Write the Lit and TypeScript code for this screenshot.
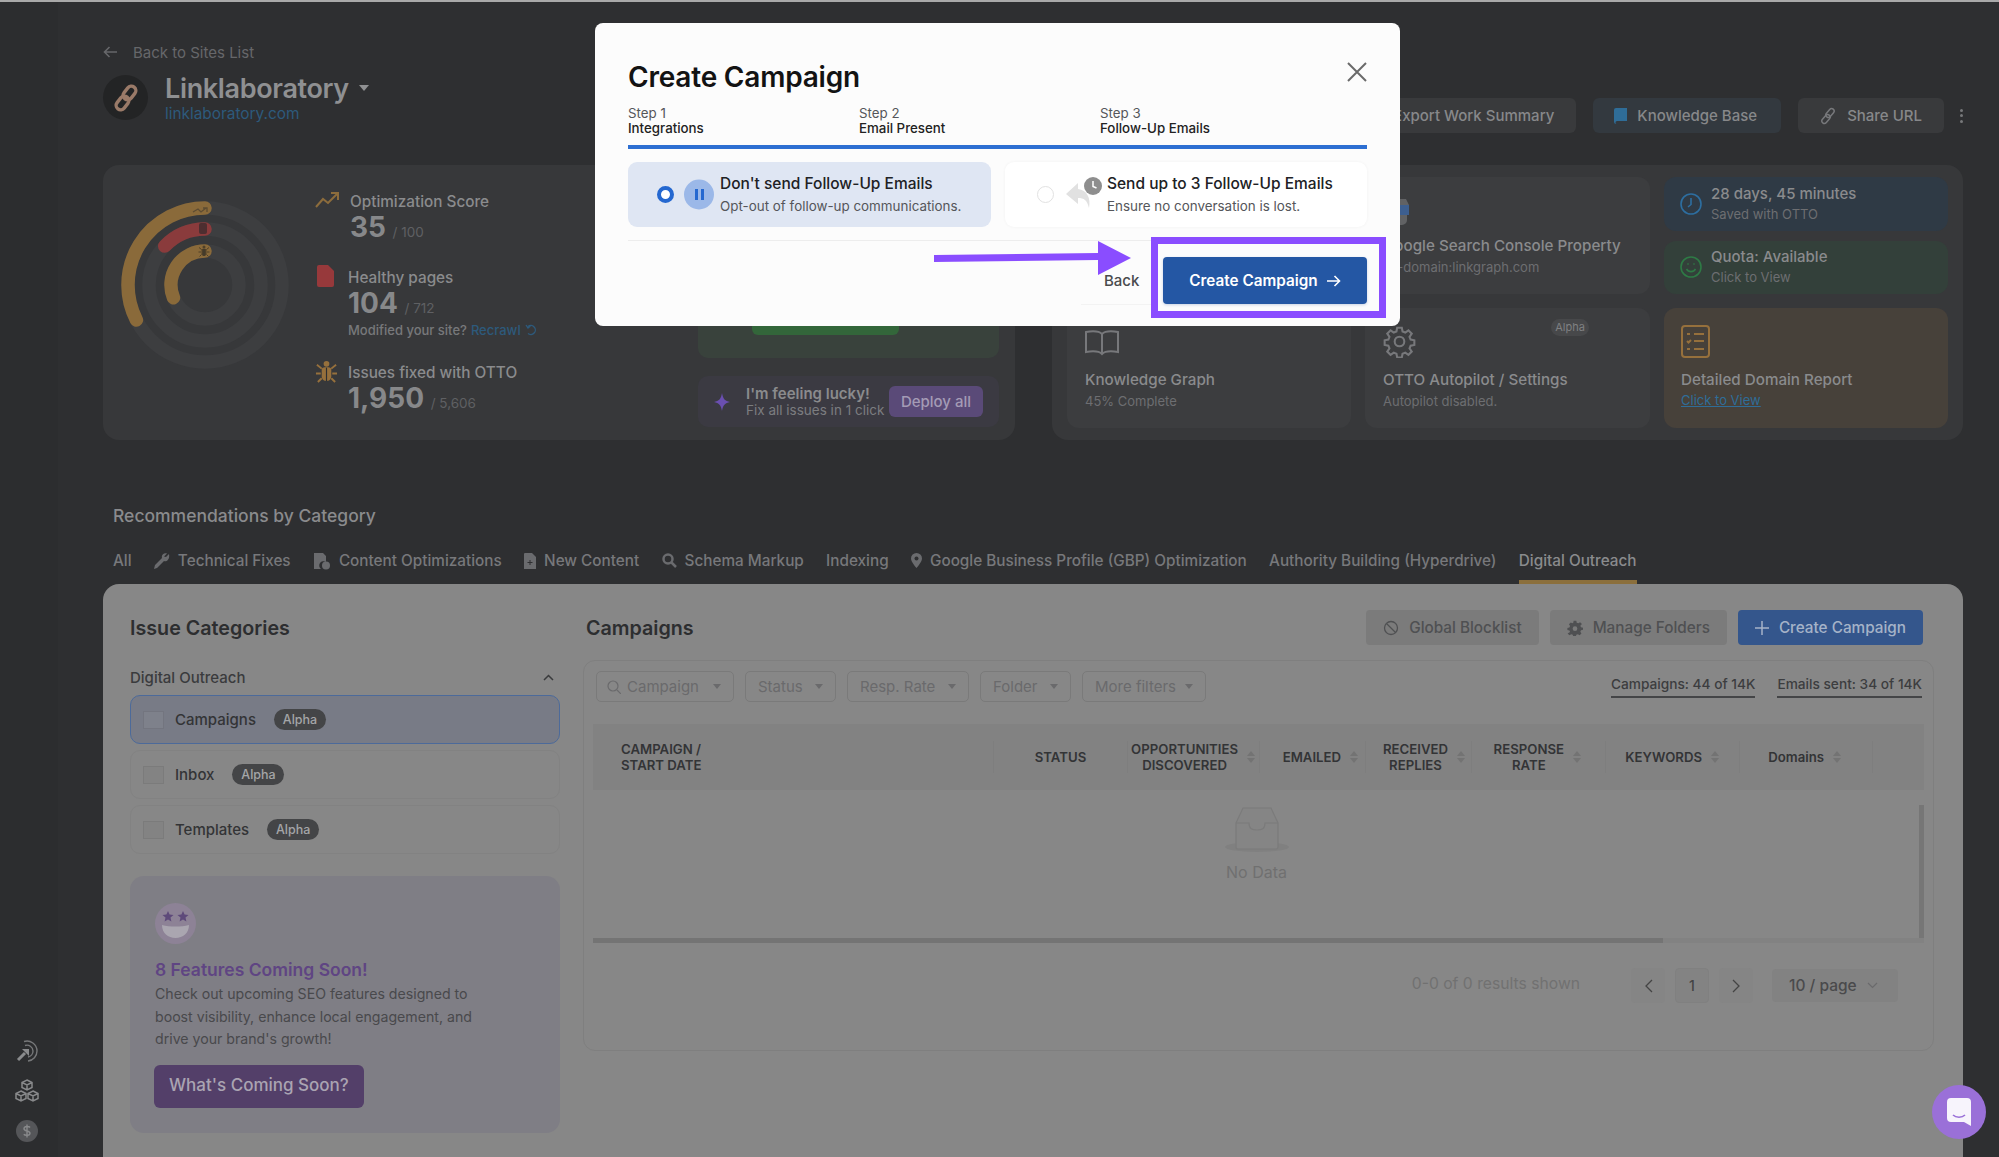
import { LitElement, html, css, svg } from 'lit';
import { customElement } from 'lit/decorators.js';

const arc = (r: number, deg: number) => {
  const a = (deg * Math.PI) / 180;
  const x = 84 - r * Math.sin(a);
  const y = 84 - r * Math.cos(a);
  return `M84 ${84 - r} A${r} ${r} 0 ${deg > 180 ? 1 : 0} 0 ${x} ${y}`;
};

const bug = (c: string) => svg`<g fill=${c}><circle cx="12" cy="4" r="3"/><path d="M7 9c1-2 9-2 10 0v8c0 3-2 5-5 5s-5-2-5-5z"/><path d="M7 9 2 5M17 9l5-4M6 14H1M18 14h5M7 19l-4 4M17 19l4 4" stroke=${c} stroke-width="2"/></g><path d="M12 8v14" stroke="#2e2f31" stroke-width="1.2"/>`;

const COLUMNS = [
  { label: ['CAMPAIGN /', 'START DATE'], left: true },
  { label: ['STATUS'], pad: 0 },
  { label: ['OPPORTUNITIES', 'DISCOVERED'], sort: true, pad: 4 },
  { label: ['EMAILED'], sort: true, pad: 7 },
  { label: ['RECEIVED', 'REPLIES'], sort: true, pad: 6 },
  { label: ['RESPONSE', 'RATE'], sort: true, pad: 24 },
  { label: ['KEYWORDS'], sort: true, pad: 20 },
  { label: ['Domains'], sort: true, pad: 31 },
];

@customElement('app-root')
export class AppRoot extends LitElement {
  static styles = css`
    :host {
      display: block;
      height: 1157px;
      overflow: hidden;
      font-family: Inter, 'Noto Sans', sans-serif;
      background: #2e2f31;
      color: #8a8b8d;
      position: relative;
    }
    * { box-sizing: border-box; }
    svg { display: block; flex: none; }
    .topline { height: 2px; background: #a9a9a9; }
    .page { display: flex; height: 1155px; }

    .side {
      width: 58px;
      flex: none;
      background: #2c2d2f;
      display: flex;
      flex-direction: column;
      justify-content: flex-end;
      align-items: center;
      gap: 17px;
      padding: 0 4px 15px 0;
    }
    .main { flex: 1; min-width: 0; padding: 40px 36px 0 45px; display: flex; flex-direction: column; }

    .head { display: flex; justify-content: space-between; height: 123px; }
    .back { display: flex; align-items: center; gap: 16px; height: 20px; font-size: 15px; color: #66676a; }
    .brand { display: flex; gap: 17px; margin-top: 13px; }
    .avatar { width: 45px; height: 45px; border-radius: 50%; background: #232425; display: flex; align-items: center; justify-content: center; }
    .brand-name { display: flex; align-items: center; gap: 10px; height: 32px; margin-top: -3px; font-size: 27px; font-weight: 600; color: #8f9092; letter-spacing: -0.35px; }
    .caret { width: 0; height: 0; border: 5px solid transparent; border-top: 6px solid #8f9092; border-bottom: 0; }
    .brand-link { font-size: 15.4px; line-height: 20px; color: #2d5a7c; }
    .actions { display: flex; align-items: center; gap: 17px; margin-top: 56px; height: 35px; }
    .action { height: 35px; display: flex; align-items: center; gap: 10px; padding: 0 22px; border-radius: 6px; background: #393a3c; font-size: 15px; font-weight: 500; color: #87888a; }
    .action.kb { background: #33393f; padding: 0 24px 0 21px; }
    .action.share { padding: 0 22px 0 21px; }
    .kebab { display: flex; flex-direction: column; gap: 2.5px; margin-left: -1px; }
    .kebab i { width: 3px; height: 3px; background: #77787a; border-radius: 50%; }

    .stats { display: grid; grid-template-columns: 912px 911px; gap: 37px; height: 275px; }
    .card { background: #37383a; border-radius: 16px; }
    .score { display: flex; padding: 36px 16px 0 18px; }
    .score-col { width: 383px; margin-left: 26px; margin-top: -9px; display: flex; flex-direction: column; gap: 20px; }
    .stat { display: flex; }
    .stat.last { margin-top: 3px; }
    .stat-ico { width: 33px; flex: none; }
    .stat-label { font-size: 15.3px; line-height: 20px; font-weight: 500; color: #8a8b8d; }
    .stat-value { font-size: 28px; line-height: 31px; font-weight: 700; color: #87888a; }
    .stat-value small { font-size: 13.5px; font-weight: 400; color: #5f6063; }
    .stat-note { font-size: 13px; line-height: 20px; display: flex; align-items: center; gap: 4px; color: #77787b; font-weight: 500; margin-top: -4px; }
    .stat-note b { color: #2d5a7c; font-weight: 500; }
    .deploy-col { width: 301px; margin-top: -24px; display: flex; flex-direction: column; gap: 18px; }
    .green { height: 181px; border-radius: 10px; background: #39423c; display: flex; align-items: flex-end; padding: 0 0 23px 54px; }
    .green i { width: 147px; height: 36px; border-radius: 6px; background: #33663a; }
    .lucky { height: 51px; border-radius: 10px; background: #3b3a42; display: flex; align-items: center; padding: 0 16px 0 15px; }
    .lucky-text { margin-left: 15px; flex: 1; font-size: 13.5px; line-height: 17px; color: #7c7d80; white-space: nowrap; }
    .lucky-text b { display: block; font-size: 15px; font-weight: 600; color: #8a8b8d; }
    .deploy-btn { width: 94px; height: 31px; border-radius: 6px; background: #5a4a78; color: #a49bb5; display: flex; align-items: center; justify-content: center; font-size: 15px; font-weight: 500; flex: none; }

    .tools { display: grid; grid-template-columns: 284px 285px 284px; grid-template-rows: 117px 120px; gap: 14px; padding: 12px 15px; }
    .tool { background: #3c3d3f; border-radius: 12px; padding: 17px 18px; position: relative; }
    .tool.orange { background: #47413a; padding-left: 17px; }
    .tool-title { font-size: 15.2px; line-height: 20px; font-weight: 500; color: #8a8b8d; margin-top: 12px; white-space: nowrap; }
    .tool-sub { font-size: 13px; line-height: 20px; color: #6d6e71; margin-top: 1px; }
    .tool-link { font-size: 13px; line-height: 16px; color: #2f6d98; margin-top: 2px; text-decoration: underline; }
    .gsc { padding-top: 22px; }
    .gsc .tool-title { margin-top: 11px; }
    .book { margin: 5px 0 14px; }
    .alpha-tag { position: absolute; top: 11px; right: 61px; width: 38px; height: 17px; border-radius: 9px; background: #47484a; font-size: 11px; line-height: 17px; text-align: center; color: #7f8082; }
    .mini-stack { display: flex; flex-direction: column; gap: 10px; }
    .mini { flex: 1; border-radius: 12px; display: flex; align-items: center; gap: 9px; padding: 0 16px; }
    .mini.blue { background: #2f3a45; }
    .mini.green2 { background: #33403a; }
    .mini b { display: block; font-size: 15px; line-height: 20px; font-weight: 500; color: #8a8b8d; }
    .mini span { display: block; font-size: 13px; line-height: 20px; color: #6d6e71; }

    h2 { margin: 64px 0 0 10px; font-size: 17.5px; line-height: 24px; font-weight: 500; color: #8a8b8d; }
    .tabs { display: flex; gap: 22.3px; margin: 21px 0 0 10px; height: 35px; font-size: 15.3px; font-weight: 500; color: #77787b; white-space: nowrap; }
    .tab { display: flex; gap: 8px; height: 35px; line-height: 24px; align-items: flex-start; }
    .tab svg { margin-top: 4px; }
    .tab.on { border-bottom: 4px solid #8b6f3c; color: #8a8b8d; }

    .panel { flex: 1; background: #878787; border-radius: 16px 16px 0 0; display: flex; gap: 23px; padding: 26px 29px 0 27px; min-height: 0; }
    .cats { width: 430px; flex: none; }
    .panel-title { font-size: 19.7px; line-height: 37px; height: 35px; font-weight: 600; color: #2d2e30; margin: 0; }
    .group { display: flex; justify-content: space-between; align-items: center; margin: 20px 0 6px; height: 24px; font-size: 15px; font-weight: 500; color: #3a3b3d; padding-right: 6px; }
    .cat { height: 49px; margin-bottom: 6px; border: 1px solid #828282; border-radius: 10px; display: flex; align-items: center; padding-left: 12px; font-size: 15px; font-weight: 500; color: #333436; }
    .cat.on { background: #787b86; border-color: #4c6a9a; }
    .box { width: 21px; height: 18px; border: 1px solid #7b7b7b; background: #838383; margin-right: 11px; }
    .cat.on .box { background: #7e818b; border-color: #73757f; }
    .badge { margin-left: 18px; width: 52px; height: 21px; border-radius: 11px; background: #444547; color: #a5a6a8; font-size: 12.5px; line-height: 21px; text-align: center; }
    .promo { height: 257px; margin-top: 22px; border-radius: 14px; background: #7f7e85; padding: 27px 25px 0; }
    .promo h3 { margin: 14px 0 0; font-size: 17.5px; line-height: 24px; font-weight: 600; color: #5f4583; }
    .promo p { margin: 1px 0 14px; font-size: 14.15px; line-height: 22.5px; color: #49494c; }
    .promo-btn { display: inline-block; height: 43px; line-height: 41px; margin-left: -1px; padding: 0 15px; border-radius: 6px; background: #533f69; color: #aaa4b2; font-size: 17px; font-weight: 500; }

    .camp { flex: 1; min-width: 0; }
    .camp-head { display: flex; align-items: center; gap: 11px; padding: 0 11px 0 3px; }
    .camp-head .panel-title { flex: 1; }
    .btn { height: 35px; display: flex; align-items: center; gap: 10px; padding: 0 17px; background: #7b7b7b; border-radius: 4px; font-size: 15.3px; font-weight: 500; color: #4f5052; white-space: nowrap; }
    .btn.primary { background: #34568c; color: #a5b3c8; }
    .table-box { height: 391px; margin-top: 15px; border: 1px solid #7f7f7f; border-radius: 12px; padding: 10px 9px 0; position: relative; }
    .filters { display: grid; grid-template-columns: 138px 91px 122px 91px 124px 1fr auto; column-gap: 11px; padding: 0 2px 0 3px; align-items: start; height: 31px; }
    .filter { height: 31px; display: flex; align-items: center; justify-content: space-between; padding: 0 12px; border: 1px solid #7a7a7a; border-radius: 5px; font-size: 15px; color: #6a6a6c; white-space: nowrap; }
    .filter.s { padding-left: 10px; }
    .filter.s span { margin: 0 auto 0 6px; }
    .tri { width: 0; height: 0; border: 4px solid transparent; border-top: 5px solid #6a6a6c; border-bottom: 0; }
    .quota { font-size: 13.7px; font-weight: 500; line-height: 20px; color: #3c3d3f; padding: 3px 0 2px; border-bottom: 2px solid #444547; white-space: nowrap; }
    .quota.first { justify-self: end; }
    .thead { display: grid; grid-template-columns: 401px 134px 132px 106px 106px 134px 134px 133px 1fr; height: 66px; margin-top: 22px; background: #828282; align-items: center; }
    .th { display: flex; align-items: center; justify-content: flex-end; gap: 9px; height: 32px; border-right: 1px solid #7e7e7e; font-size: 13.2px; line-height: 16px; font-weight: 600; color: #333436; text-align: center; }
    .th.left { justify-content: flex-start; padding-left: 28px; text-align: left; }
    .th.center { justify-content: center; }
    .th:last-child { border: 0; }
    .sort { display: flex; flex-direction: column; gap: 2px; }
    .sort i { width: 0; height: 0; border: 4px solid transparent; }
    .sort i:first-child { border-bottom: 5px solid #737373; border-top: 0; }
    .sort i:last-child { border-top: 5px solid #737373; border-bottom: 0; }
    .tbody { height: 148px; position: relative; display: flex; flex-direction: column; align-items: center; padding: 17px 4px 0 0; font-size: 16px; line-height: 20px; color: #707070; }
    .tbody span { margin-top: 9px; }
    .vbar { position: absolute; top: 15px; right: 0; width: 5px; height: 133px; background: #767676; }
    .hbar { height: 5px; background: #828282; }
    .hbar i { display: block; width: 1070px; height: 5px; background: #747474; }
    .pager { display: flex; align-items: center; justify-content: flex-end; gap: 10px; margin-top: 25px; padding-right: 26px; height: 35px; }
    .results { font-size: 15.7px; color: #717171; margin-right: 41px; margin-top: -5px; }
    .pg { width: 34px; height: 35px; border-radius: 4px; background: #858585; display: flex; align-items: center; justify-content: center; font-size: 14px; font-weight: 500; color: #444; }
    .pg.cur { background: #838383; border: 1px solid #808080; }
    .size { width: 126px; height: 33px; margin-left: 9px; border-radius: 4px; background: #828282; display: flex; align-items: center; gap: 10px; padding: 0 10px 0 17px; font-size: 15.5px; font-weight: 500; color: #4a4a4c; white-space: nowrap; }

    .chat { position: absolute; left: 1932px; top: 1085px; width: 54px; height: 54px; border-radius: 50%; background: #9a70d8; display: flex; align-items: center; justify-content: center; }

    .modal { position: absolute; left: 595px; top: 23px; width: 805px; height: 303px; background: #fcfcfc; border-radius: 8px; padding: 35px 33px 0; color: #222; }
    .modal h1 { margin: 0; font-size: 28px; line-height: 38px; font-weight: 600; color: #131313; letter-spacing: -0.2px; }
    .close { position: absolute; left: 752px; top: 39px; }
    .steps { display: grid; grid-template-columns: 231px 241px 1fr; margin-top: 10px; padding-bottom: 9px; border-bottom: 4px solid #2d6fd2; font-size: 13.3px; line-height: 15px; }
    .steps span { display: block; color: #55565a; }
    .steps b { display: block; font-weight: 500; color: #222; }
    .options { display: grid; grid-template-columns: 363px 362px; gap: 14px; margin-top: 13px; }
    .option { height: 65px; border-radius: 9px; display: flex; align-items: center; background: #fff; box-shadow: 0 0 3px #f1f1f1; }
    .option.on { background: #dfe6f3; box-shadow: none; padding-left: 29px; }
    .option.off { padding-left: 32px; }
    .radio { width: 17px; height: 17px; border-radius: 50%; border: 4.5px solid #2568d0; background: #fff; flex: none; }
    .off .radio { border: 1.5px solid #e2e2e2; }
    .pause { margin-left: 10px; margin-right: 6px; }
    .reply { margin-left: 11px; margin-right: 4px; }
    .opt-title { font-size: 15.5px; line-height: 20px; font-weight: 500; color: #202124; white-space: nowrap; }
    .opt-sub { font-size: 13.4px; line-height: 20px; color: #55565a; margin-top: 2px; white-space: nowrap; }
    .modal-foot { margin-top: 13px; border-top: 1px solid #ededed; display: flex; justify-content: flex-end; padding-top: 16px; }
    .back-btn { width: 74px; height: 48px; border-bottom: 1px solid #f3f3f3; display: flex; align-items: center; padding-left: 23px; font-size: 15px; font-weight: 500; color: #4a4b4d; }
    .go { width: 204px; height: 47px; margin-left: 8px; background: #2457a4; border-radius: 4px; display: flex; align-items: center; justify-content: center; gap: 9px; color: #fff; font-size: 15.3px; font-weight: 600; box-shadow: 0 1px 3px #c8d2e4; }
    .callout { position: absolute; left: 556px; top: 214px; width: 235px; height: 81px; border: 7px solid #8a4dff; }
    .pointer { position: absolute; left: 934px; top: 241px; }
  `;

  private sort() {
    return html`<div class="sort"><i></i><i></i></div>`;
  }

  render() {
    return html`
      <div class="topline"></div>
      <div class="page">
        ${this.renderSide()}
        <div class="main">
          <div class="head">
            <div>
              <div class="back">
                <svg width="14" height="12" viewBox="0 0 14 12" fill="none" stroke="#66676a" stroke-width="1.6"><path d="M14 6H1.5M6.5 1 1.5 6l5 5"/></svg>
                Back to Sites List
              </div>
              <div class="brand">
                <div class="avatar">
                  <svg width="28" height="28" viewBox="0 0 28 28" fill="none" stroke="#9a7a68" stroke-width="3.4"><rect x="13" y="1.5" width="9" height="15" rx="4.5" transform="rotate(38 17.5 9)"/><rect x="6" y="11.5" width="9" height="15" rx="4.5" transform="rotate(38 10.5 19)"/></svg>
                </div>
                <div>
                  <div class="brand-name">Linklaboratory <i class="caret"></i></div>
                  <div class="brand-link">linklaboratory.com</div>
                </div>
              </div>
            </div>
            <div class="actions">
              <div class="action">Export Work Summary</div>
              <div class="action kb">
                <svg width="13" height="16" viewBox="0 0 13 16"><path d="M2 0h11v13H3a1 1 0 0 0 0 3h10H2.500A2.500 2.500 0 0 1 0 13.500V2a2 2 0 0 1 2-2z" fill="#2f6d98"/></svg>
                Knowledge Base
              </div>
              <div class="action share">
                <svg width="18" height="18" viewBox="0 0 18 18" fill="none" stroke="#77787b" stroke-width="1.5"><rect x="8.500" y="1" width="5" height="10" rx="2.500" transform="rotate(40 11 6)"/><rect x="4.500" y="7" width="5" height="10" rx="2.500" transform="rotate(40 7 12)"/></svg>
                Share URL
              </div>
              <div class="kebab"><i></i><i></i><i></i></div>
            </div>
          </div>
          <div class="stats">
            ${this.renderScore()}
            ${this.renderTools()}
          </div>
          <h2>Recommendations by Category</h2>
          ${this.renderTabs()}
          <div class="panel">
            ${this.renderCats()}
            ${this.renderCampaigns()}
          </div>
        </div>
      </div>
      <div class="chat">
        <svg width="24" height="28" viewBox="0 0 24 28"><path d="M4 0h16a4 4 0 0 1 4 4v24l-7-4H4a4 4 0 0 1-4-4V4a4 4 0 0 1 4-4z" fill="#f7f4fc"/><path d="M6 17c3 3 9 3 12 0" fill="none" stroke="#9a70d8" stroke-width="1.6"/></svg>
      </div>
      ${this.renderModal()}
    `;
  }

  private renderSide() {
    return html`<div class="side">
      <svg width="23" height="23" viewBox="0 0 23 23" fill="none" stroke="#77787a" stroke-width="1.4"><path d="M8 2.500A10 10 0 0 1 21 12a10 10 0 0 1-9 10"/><path d="M9 6.500A6 6 0 0 1 17 12a6 6 0 0 1-5 6"/><path d="M2 21l7-7" stroke-width="3" stroke="#8a8b8d"/><path d="M6 10h7v7z" fill="#8a8b8d" stroke="none"/></svg>
      <svg width="26" height="24" viewBox="0 0 26 24" fill="none" stroke="#88898b" stroke-width="1.500"><path d="M13 1l5 2.500v5L13 11 8 8.500v-5zM8 3.500l5 2.500 5-2.500M13 6v5M7 12l5 2.500v5L7 22l-5-2.500v-5zM2 14.500 7 17l5-2.500M7 17v5M19 12l5 2.500v5L19 22l-5-2.500v-5zM14 14.500l5 2.500 5-2.500M19 17v5"/></svg>
      <svg width="22" height="22" viewBox="0 0 22 22"><circle cx="11" cy="11" r="11" fill="#555659"/><path d="M14 7.500c-1-1.500-6-1.500-6 1.200 0 3 6 1.500 6 4.500 0 2.500-5 2.500-6.200 1M11 4.500v13" fill="none" stroke="#88898b" stroke-width="1.400"/></svg>
    </div>`;
  }

  private renderScore() {
    return html`<div class="card score">
      <svg width="168" height="168" viewBox="0 0 168 168" fill="none" stroke-width="13.5">
        <circle cx="84" cy="84" r="77" stroke="#3d3e40"/>
        <circle cx="84" cy="84" r="56" stroke="#3d3e40"/>
        <circle cx="84" cy="84" r="34" stroke="#3d3e40"/>
        <path d=${arc(77, 117)} stroke="#8a6a3a" stroke-linecap="round"/>
        <path d=${arc(56, 46)} stroke="#8a3b3c" stroke-linecap="round"/>
        <path d=${arc(34, 112)} stroke="#8a6a3a" stroke-linecap="round"/>
        <path d="M72 11l5-3 3 3 5-4m-3 0h4v4" stroke="#5d4c32" stroke-width="1.300"/>
        <rect x="78" y="22" width="8" height="11" rx="2" fill="#4d2e30" stroke="none"/>
        <g transform="translate(77 44) scale(.5)">${bug('#4f4029')}</g>
      </svg>
      <div class="score-col">
        <div class="stat">
          <div class="stat-ico"><svg width="25" height="16" viewBox="0 0 25 16" fill="none" stroke="#8c6c3c" stroke-width="2"><path d="M1 15l7-8 5 4 9-9M16 1h7v7"/></svg></div>
          <div style="margin-left:2px">
            <div class="stat-label">Optimization Score</div>
            <div class="stat-value">35 <small>/ 100</small></div>
          </div>
        </div>
        <div class="stat">
          <div class="stat-ico"><svg style="margin:-3px 0 0 2px" width="17" height="22" viewBox="0 0 17 22"><path d="M2 0h9l6 6v14a2 2 0 0 1-2 2H2a2 2 0 0 1-2-2V2a2 2 0 0 1 2-2z" fill="#97393b"/></svg></div>
          <div>
            <div class="stat-label">Healthy pages</div>
            <div class="stat-value">104 <small>/ 712</small></div>
            <div class="stat-note">Modified your site? <b>Recrawl</b>
              <svg width="12" height="12" viewBox="0 0 12 12" fill="none" stroke="#2d5a7c" stroke-width="1.300"><path d="M3 2.500a4.500 4.500 0 1 1 0 7M1 1l2 3 2.500-2"/></svg>
            </div>
          </div>
        </div>
        <div class="stat last">
          <div class="stat-ico"><svg style="margin-top:-3px" width="23" height="23" viewBox="0 0 24 24">${bug('#96703c')}</svg></div>
          <div>
            <div class="stat-label">Issues fixed with OTTO</div>
            <div class="stat-value">1,950 <small>/ 5,606</small></div>
          </div>
        </div>
      </div>
      <div class="deploy-col">
        <div class="green"><i></i></div>
        <div class="lucky">
          <svg width="18" height="20" viewBox="0 0 18 20"><path d="M9 1c1 6 3 8 8 9-5 1-7 3-8 9-1-6-3-8-8-9 5-1 7-3 8-9z" fill="#6a4fb0"/></svg>
          <div class="lucky-text"><b>I'm feeling lucky!</b>Fix all issues in 1 click</div>
          <div class="deploy-btn">Deploy all</div>
        </div>
      </div>
    </div>`;
  }

  private renderTools() {
    return html`<div class="card tools">
      <div class="tool"></div>
      <div class="tool gsc">
        <svg width="20" height="26" viewBox="0 0 20 26" style="margin-left:6px"><rect x="0" y="6" width="20" height="10" fill="#3d5f90"/><path d="M3 0h14l3 6H0zM2 16h16v5a5 5 0 0 1-5 5H7a5 5 0 0 1-5-5z" fill="#616264"/></svg>
        <div class="tool-title">Google Search Console Property</div>
        <div class="tool-sub">sc-domain:linkgraph.com</div>
      </div>
      <div class="mini-stack">
        <div class="mini blue">
          <svg width="22" height="22" viewBox="0 0 22 22" fill="none" stroke="#2d6ea0" stroke-width="1.600"><circle cx="11" cy="11" r="10"/><path d="M11 5v6.500l-3 2.500"/></svg>
          <div><b>28 days, 45 minutes</b><span>Saved with OTTO</span></div>
        </div>
        <div class="mini green2">
          <svg width="22" height="22" viewBox="0 0 22 22" fill="none" stroke="#2e7a45" stroke-width="1.600"><circle cx="11" cy="11" r="10"/><path d="M6.500 13c2 3.500 7 3.500 9 0"/><path d="M7.500 8h1M13.500 8h1" stroke-width="2"/></svg>
          <div><b>Quota: Available</b><span>Click to View</span></div>
        </div>
      </div>
      <div class="tool">
        <svg class="book" width="34" height="26" viewBox="0 0 34 26" fill="none" stroke="#77787b" stroke-width="2"><path d="M17 4C14 1 7 1 1 2v20c6-1 13-1 16 2 3-3 10-3 16-2V2c-6-1-13-1-16 2zM17 4v20"/></svg>
        <div class="tool-title" style="margin-top:0">Knowledge Graph</div>
        <div class="tool-sub">45% Complete</div>
      </div>
      <div class="tool">
        <span class="alpha-tag">Alpha</span>
        <svg width="33" height="33" viewBox="0 0 24 24" fill="none" stroke="#77787b" stroke-width="1.500"><circle cx="12" cy="12" r="3.500"/><path d="M10.300 2h3.400l.5 2.700 2 .8 2.300-1.600 2.400 2.400-1.600 2.300.8 2 2.700.5v3.400l-2.700.5-.8 2 1.600 2.300-2.400 2.400-2.300-1.600-2 .8-.5 2.700h-3.400l-.5-2.700-2-.8-2.300 1.600-2.400-2.400 1.600-2.300-.8-2-2.700-.5v-3.400l2.700-.5.8-2-1.600-2.300 2.400-2.400 2.300 1.600 2-.8z"/></svg>
        <div class="tool-title">OTTO Autopilot / Settings</div>
        <div class="tool-sub">Autopilot disabled.</div>
      </div>
      <div class="tool orange">
        <svg width="29" height="33" viewBox="0 0 29 33" fill="none" stroke="#96703c" stroke-width="2"><rect x="1" y="1" width="27" height="31" rx="3"/><path d="M6 9h3M6 16l1.500 1.500L10 15M6 24h3M13 9h10M13 16h10M13 24h10"/></svg>
        <div class="tool-title">Detailed Domain Report</div>
        <div class="tool-link">Click to View</div>
      </div>
    </div>`;
  }

  private renderTabs() {
    const c = '#6a6b6e';
    return html`<div class="tabs">
      <div class="tab">All</div>
      <div class="tab"><svg width="16" height="16" viewBox="0 0 16 16"><path d="M15 1l-3 3-2-.5L13 .5C10-.5 7 2 8 5L1 12l-1 4 3-1 7-7c3 1 6-2 5-7z" fill=${c}/></svg>Technical Fixes</div>
      <div class="tab"><svg width="18" height="17" viewBox="0 0 18 17"><path d="M1 0h9l3 3v6a4 4 0 0 0-5 7H1z" fill=${c}/><circle cx="13" cy="12.500" r="4" fill=${c}/></svg>Content Optimizations</div>
      <div class="tab"><svg width="12" height="16" viewBox="0 0 12 16"><path d="M1 0h7l4 4v12H0V1a1 1 0 0 1 1-1z" fill=${c}/><path d="M6 7v5M3.500 9.500h5" stroke="#2e2f31"/></svg>New Content</div>
      <div class="tab"><svg width="15" height="15" viewBox="0 0 15 15"><circle cx="6" cy="6" r="4.500" fill="none" stroke=${c} stroke-width="2.500"/><path d="M9.500 9.500 14 14" stroke=${c} stroke-width="2.500"/></svg>Schema Markup</div>
      <div class="tab">Indexing</div>
      <div class="tab"><svg width="11" height="15" viewBox="0 0 11 15"><path d="M5.500 0A5.500 5.500 0 0 1 11 5.500C11 9 5.500 15 5.500 15S0 9 0 5.500A5.500 5.500 0 0 1 5.500 0z" fill=${c}/><circle cx="5.500" cy="5.500" r="2" fill="#2e2f31"/></svg>Google Business Profile (GBP) Optimization</div>
      <div class="tab">Authority Building (Hyperdrive)</div>
      <div class="tab on">Digital Outreach</div>
    </div>`;
  }

  private renderCats() {
    const items = [['Campaigns', true], ['Inbox', false], ['Templates', false]];
    return html`<div class="cats">
      <h3 class="panel-title">Issue Categories</h3>
      <div class="group">Digital Outreach
        <svg width="11" height="7" viewBox="0 0 11 7" fill="none" stroke="#3a3b3d" stroke-width="1.500"><path d="M1 6l4.500-4.500L10 6"/></svg>
      </div>
      ${items.map(([name, on]) => html`<div class="cat ${on ? 'on' : ''}"><i class="box"></i>${name}<span class="badge">Alpha</span></div>`)}
      <div class="promo">
        <svg width="41" height="41" viewBox="0 0 41 41">
          <circle cx="20.500" cy="20.500" r="20.500" fill="#8d8296"/>
          <path d="M13 8l1.600 3.600 3.900.4-3 2.600.9 3.800L13 16.500 9.600 18.400l.9-3.800-3-2.600 3.900-.4zM28 8l1.600 3.600 3.900.4-3 2.600.9 3.800L28 16.500l-3.400 1.900.9-3.800-3-2.600 3.900-.4z" fill="#5e4a7a"/>
          <path d="M7 22c8 2 19 2 27 0 0 8-6 13-13.500 13S7 30 7 22z" fill="#aaa6b0"/>
        </svg>
        <h3>8 Features Coming Soon!</h3>
        <p>Check out upcoming SEO features designed to<br />boost visibility, enhance local engagement, and<br />drive your brand's growth!</p>
        <span class="promo-btn">What's Coming Soon?</span>
      </div>
    </div>`;
  }

  private renderCampaigns() {
    const filters = ['Status', 'Resp. Rate', 'Folder', 'More filters'];
    return html`<div class="camp">
      <div class="camp-head">
        <h3 class="panel-title">Campaigns</h3>
        <div class="btn"><svg width="16" height="16" viewBox="0 0 16 16" fill="none" stroke="#4f5052" stroke-width="1.300"><circle cx="8" cy="8" r="6.500"/><path d="M3.500 3.500l9 9"/></svg>Global Blocklist</div>
        <div class="btn"><svg width="16" height="16" viewBox="0 0 24 24" fill="#4f5052"><path d="M10 1h4l.6 3 2.400 1 2.600-1.700 2.800 2.800L20 8.700l1 2.300 3 .6v3l-3 .6-1 2.400 1.700 2.600-2.800 2.800-2.600-1.700-2.400 1-.6 3h-4l-.6-3-2.400-1-2.600 1.700-2.800-2.800L4.600 18l-1-2.400-3-.6v-3l3-.6 1-2.300-1.700-2.600 2.800-2.800L8 5l1.400-1z"/><circle cx="12" cy="13" r="3.500" fill="#7b7b7b"/></svg>Manage Folders</div>
        <div class="btn primary"><svg width="14" height="14" viewBox="0 0 14 14" stroke="#a5b3c8" stroke-width="1.500"><path d="M7 0v14M0 7h14"/></svg>Create Campaign</div>
      </div>
      <div class="table-box">
        <div class="filters">
          <div class="filter s">
            <svg width="14" height="14" viewBox="0 0 14 14" fill="none" stroke="#6a6a6c" stroke-width="1.200"><circle cx="6" cy="6" r="5"/><path d="M10 10l4 4"/></svg>
            <span>Campaign</span><i class="tri"></i>
          </div>
          ${filters.map(f => html`<div class="filter">${f}<i class="tri"></i></div>`)}
          <div class="quota first">Campaigns: 44 of 14K</div>
          <div class="quota" style="margin-left:11px">Emails sent: 34 of 14K</div>
        </div>
        <div class="thead">
          ${COLUMNS.map(col => html`
            <div class="th ${col.left ? 'left' : ''} ${col.pad === 0 ? 'center' : ''}" style=${col.pad ? `padding-right:${col.pad}px` : ''}>
              <div>${col.label.map(l => html`<div>${l}</div>`)}</div>
              ${col.sort ? this.sort() : ''}
            </div>`)}
          <div></div>
        </div>
        <div class="tbody">
          <svg width="66" height="46" viewBox="0 0 66 46" fill="none" stroke="#7b7b7b" stroke-width="1.200">
            <ellipse cx="33" cy="40" rx="32" ry="5" fill="#808080" stroke="none"/>
            <path d="M12 16 19 1h28l7 15v24a2 2 0 0 1-2 2H14a2 2 0 0 1-2-2z" fill="#858585"/>
            <path d="M12 16h13c0 6 3 7 8 7s8-1 8-7h13"/>
          </svg>
          <span>No Data</span>
          <div class="vbar"></div>
        </div>
        <div class="hbar"><i></i></div>
        <div class="pager">
          <div class="results">0-0 of 0 results shown</div>
          <div class="pg"><svg width="9" height="14" viewBox="0 0 9 14" fill="none" stroke="#444" stroke-width="1.300"><path d="M8 1 2 7l6 6"/></svg></div>
          <div class="pg cur">1</div>
          <div class="pg"><svg width="9" height="14" viewBox="0 0 9 14" fill="none" stroke="#444" stroke-width="1.300"><path d="M1 1l6 6-6 6"/></svg></div>
          <div class="size">10 / page<svg width="11" height="7" viewBox="0 0 11 7" fill="none" stroke="#6a6a6c" stroke-width="1.200"><path d="M1 1l4.500 4.500L10 1"/></svg></div>
        </div>
      </div>
    </div>`;
  }

  private renderModal() {
    return html`<div class="modal">
      <h1>Create Campaign</h1>
      <svg class="close" width="20" height="20" viewBox="0 0 20 20" stroke="#6a6a6a" stroke-width="2"><path d="M1 1l18 18M19 1 1 19"/></svg>
      <div class="steps">
        <div><span>Step 1</span><b>Integrations</b></div>
        <div><span>Step 2</span><b>Email Present</b></div>
        <div><span>Step 3</span><b>Follow-Up Emails</b></div>
      </div>
      <div class="options">
        <div class="option on">
          <i class="radio"></i>
          <svg class="pause" width="30" height="31" viewBox="0 0 30 31"><circle cx="15" cy="15.500" r="15" fill="#9bb8e8"/><path d="M11 10h3v11h-3zM17 10h3v11h-3z" fill="#2568d0"/></svg>
          <div>
            <div class="opt-title">Don't send Follow-Up Emails</div>
            <div class="opt-sub">Opt-out of follow-up communications.</div>
          </div>
        </div>
        <div class="option off">
          <i class="radio"></i>
          <svg class="reply" width="38" height="36" viewBox="0 0 38 36">
            <path d="M13 6 1 17l12 10v-6c6 0 9 2 11 10 2-10-2-18-11-19z" fill="#e1e1e1"/>
            <circle cx="28" cy="9" r="9" fill="#8e8e8e"/>
            <path d="M28 4v5.500l3.500 1.500" fill="none" stroke="#fff" stroke-width="1.500"/>
          </svg>
          <div>
            <div class="opt-title">Send up to 3 Follow-Up Emails</div>
            <div class="opt-sub">Ensure no conversation is lost.</div>
          </div>
        </div>
      </div>
      <div class="modal-foot">
        <div class="back-btn">Back</div>
        <div class="go">Create Campaign
          <svg width="14" height="12" viewBox="0 0 14 12" fill="none" stroke="#fff" stroke-width="1.600"><path d="M0 6h12.500M7.500 1l5 5-5 5"/></svg>
        </div>
      </div>
      <div class="callout"></div>
    </div>
    <svg class="pointer" width="198" height="35" viewBox="0 0 198 35"><path d="M0 14 164 12V0l33 17-33 17V19L0 21z" fill="#8a4dff"/></svg>`;
  }
}
